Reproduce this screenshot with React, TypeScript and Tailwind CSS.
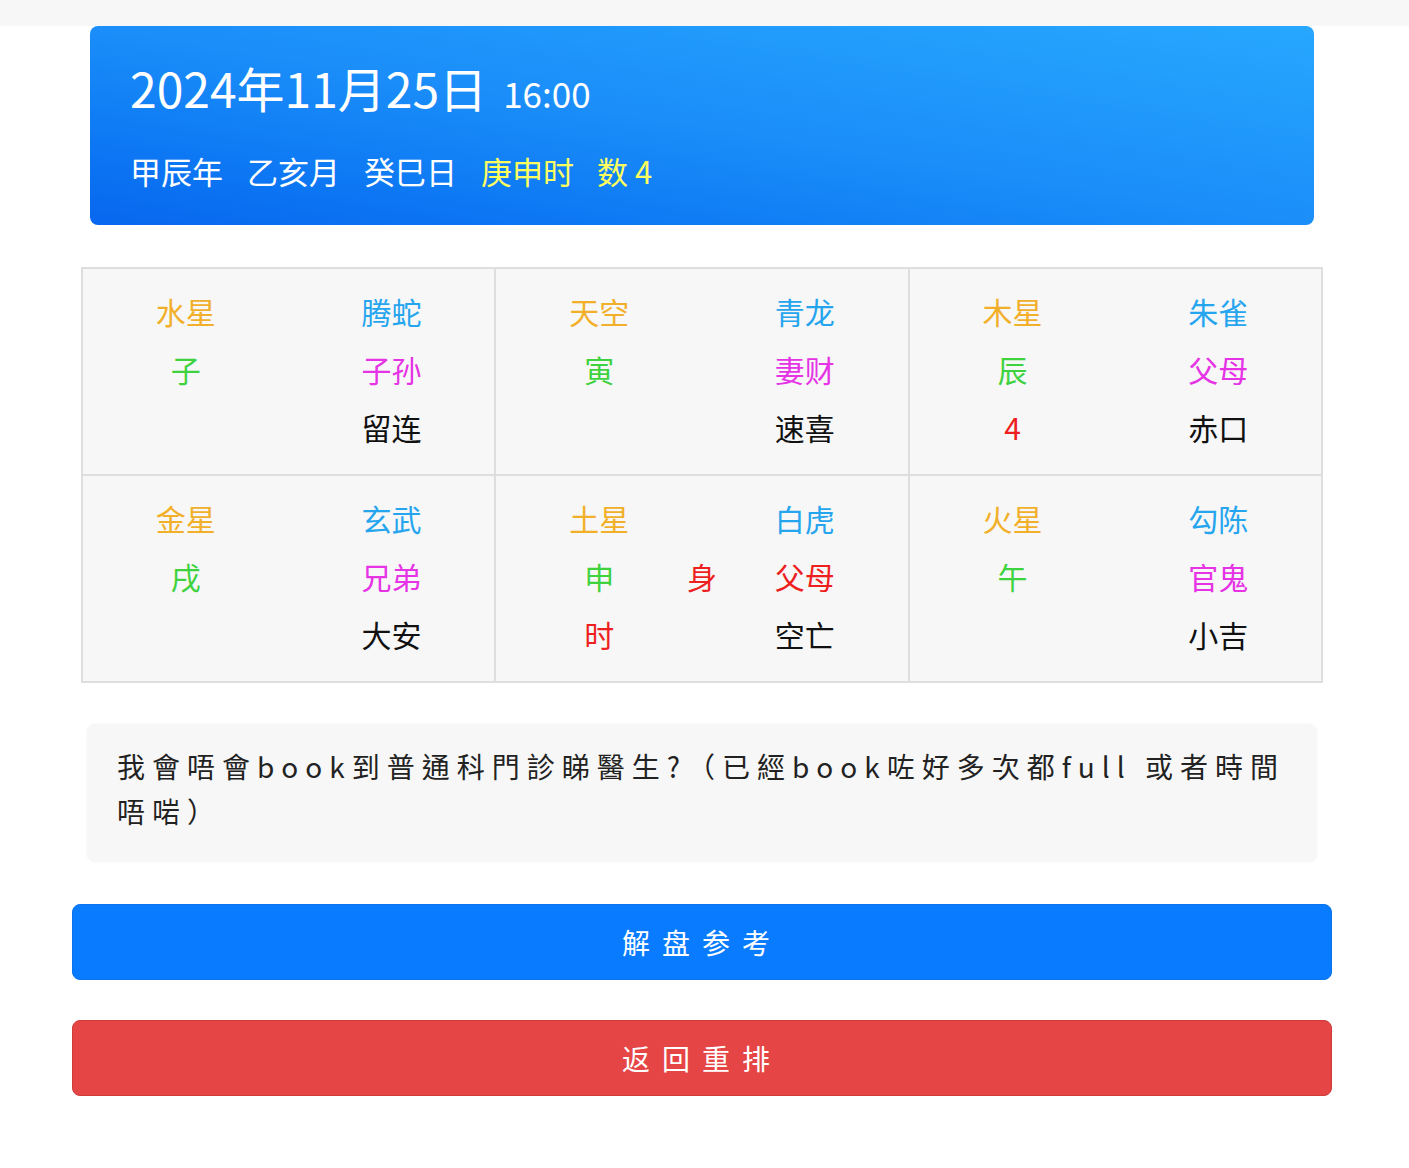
import React from "react";

type Item = { t: string; c: string };
type Line = [Item | null, Item | null, Item | null];

const OR = "text-[#f2b02a]";
const BL = "text-[#26a5ef]";
const GR = "text-[#3fd23f]";
const MG = "text-[#e533e5]";
const RD = "text-[#ee1f1f]";
const BK = "text-[#111111]";

const cells: Line[][] = [
  [
    [{ t: "水星", c: OR }, null, { t: "腾蛇", c: BL }],
    [{ t: "子", c: GR }, null, { t: "子孙", c: MG }],
    [null, null, { t: "留连", c: BK }],
  ],
  [
    [{ t: "天空", c: OR }, null, { t: "青龙", c: BL }],
    [{ t: "寅", c: GR }, null, { t: "妻财", c: MG }],
    [null, null, { t: "速喜", c: BK }],
  ],
  [
    [{ t: "木星", c: OR }, null, { t: "朱雀", c: BL }],
    [{ t: "辰", c: GR }, null, { t: "父母", c: MG }],
    [{ t: "4", c: RD }, null, { t: "赤口", c: BK }],
  ],
  [
    [{ t: "金星", c: OR }, null, { t: "玄武", c: BL }],
    [{ t: "戌", c: GR }, null, { t: "兄弟", c: MG }],
    [null, null, { t: "大安", c: BK }],
  ],
  [
    [{ t: "土星", c: OR }, null, { t: "白虎", c: BL }],
    [{ t: "申", c: GR }, { t: "身", c: RD }, { t: "父母", c: RD }],
    [{ t: "时", c: RD }, null, { t: "空亡", c: BK }],
  ],
  [
    [{ t: "火星", c: OR }, null, { t: "勾陈", c: BL }],
    [{ t: "午", c: GR }, null, { t: "官鬼", c: MG }],
    [null, null, { t: "小吉", c: BK }],
  ],
];

function Cell({ lines }: { lines: Line[] }) {
  return (
    <div className="border-r-2 border-b-2 border-[#dedede] bg-[#f7f7f7] pt-[13px] pb-[18px]">
      {lines.map((ln, i) => (
        <div key={i} className="flex h-[58px] items-center text-[30px] leading-[58px]">
          <div className={`w-1/2 text-center ${ln[0] ? ln[0].c : ""}`}>{ln[0] ? ln[0].t : ""}</div>
          <div className="flex w-0 justify-center">
            {ln[1] ? <span className={`whitespace-nowrap ${ln[1].c}`}>{ln[1].t}</span> : null}
          </div>
          <div className={`w-1/2 text-center ${ln[2] ? ln[2].c : ""}`}>{ln[2] ? ln[2].t : ""}</div>
        </div>
      ))}
    </div>
  );
}

export default function App() {
  return (
    <div
      className="min-h-[1168px] w-full bg-white"
      style={{ fontFamily: '"Noto Sans CJK SC", "Noto Sans", sans-serif' }}
    >
      <div className="h-[26px] w-full bg-[#f7f7f7]" />
      <div className="flex w-[1404px] flex-col items-center">
        {/* Header */}
        <div className="h-[199px] w-[1224px] rounded-lg bg-linear-to-tr from-[#0867ef] via-[#1b8ef9] to-[#27a7fe] px-[40px] pt-[33px] text-white">
          <div className="flex h-[56px] items-baseline leading-[56px]">
            <span className="text-[48px]">2024年11月25日</span>
            <span className="ml-[16px] text-[35px]">16:00</span>
          </div>
          <div className="mt-[36px] flex h-[40px] items-center text-[31px] leading-[40px]">
            <span>甲辰年</span>
            <span className="ml-[24px]">乙亥月</span>
            <span className="ml-[24px]">癸巳日</span>
            <span className="ml-[24px] text-[#ffff5e]">庚申时</span>
            <span className="ml-[23px] text-[#ffff5e]">数 4</span>
          </div>
        </div>

        {/* Grid */}
        <div className="mt-[42px] grid w-[1242px] grid-cols-3 border-t-2 border-l-2 border-[#dedede]">
          {cells.map((c, i) => (
            <Cell key={i} lines={c} />
          ))}
        </div>

        {/* Question */}
        <div
          className="mt-[41px] w-[1230px] rounded-lg bg-[#f7f7f7] px-[30px] pt-[20px] pb-[28px] text-[28px] leading-[45px] tracking-[7px] text-[#222222] shadow-[0_0_3px_rgba(0,0,0,0.04)]"
          style={{ fontFamily: '"Noto Sans CJK TC", "Noto Sans", sans-serif' }}
        >
          <div className="whitespace-nowrap">我會唔會book到普通科門診睇醫生?（已經book咗好多次都full 或者時間</div>
          <div className="whitespace-nowrap">唔啱）</div>
        </div>

        {/* Buttons */}
        <button className="mt-[42px] flex h-[76px] w-[1260px] items-center justify-center rounded-lg border border-[#0a74ee] bg-[#087bff] text-[28px] tracking-[12px] text-white">
          解盘参考
        </button>
        <button className="mt-[40px] flex h-[76px] w-[1260px] items-center justify-center rounded-lg border border-[#cf3a3a] bg-[#e64545] text-[28px] tracking-[12px] text-white">
          返回重排
        </button>
      </div>
    </div>
  );
}
